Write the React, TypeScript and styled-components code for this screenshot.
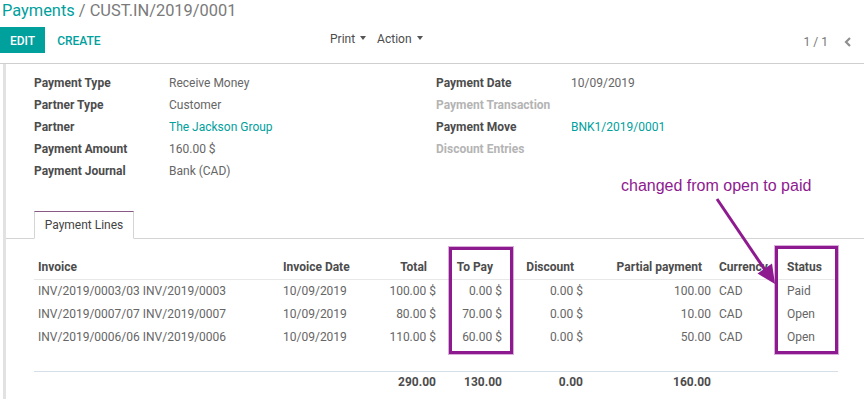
import React from "react";
import styled, { createGlobalStyle } from "styled-components";

const GlobalStyle = createGlobalStyle`
  html, body { margin: 0; padding: 0; background: #ffffff; }
  body { font-family: Roboto, "Noto Sans", sans-serif; font-size: 12px; color: #666666; }
  * { box-sizing: border-box; }
`;

const TEAL = "#00A09D";
const PURPLE = "#8E1A8F";

const Page = styled.div`
  position: relative;
  width: 864px;
  height: 399px;
  overflow: hidden;
  background: #fff;
`;

const ControlPanel = styled.div`
  height: 64px;
  border-bottom: 1px solid #cfcfcf;
  padding-left: 0;
`;

const Breadcrumb = styled.div`
  font-size: 16.4px;
  line-height: 22px;
  padding-left: 2px;
  color: #7a7a7a;
  white-space: nowrap;
`;

const Crumb = styled.span`
  color: ${TEAL};
`;

const ButtonRow = styled.div`
  display: flex;
  align-items: flex-start;
  margin-top: 5px;
  height: 26px;
`;

const MainButtons = styled.div`
  width: 330px;
  display: flex;
  gap: 0;
`;

const Button = styled.button<{ $primary?: boolean }>`
  height: 26px;
  padding: 2px 10px 0;
  border: none;
  border-radius: 0;
  font-family: Roboto, sans-serif;
  font-size: 12px;
  font-weight: 500;
  text-transform: uppercase;
  background: ${(p) => (p.$primary ? TEAL : "transparent")};
  color: ${(p) => (p.$primary ? "#ffffff" : TEAL)};
  margin-right: ${(p) => (p.$primary ? "2px" : "0")};
`;

const Sidebar = styled.div`
  display: flex;
  gap: 11px;
  padding-top: 2px;
`;

const Dropdown = styled.div`
  display: flex;
  align-items: center;
  gap: 5px;
  line-height: 20px;
  font-size: 12px;
  color: #4c4c4c;
`;

const Caret = styled.span`
  width: 0;
  height: 0;
  border-left: 3.5px solid transparent;
  border-right: 3.5px solid transparent;
  border-top: 4px solid #555;
  margin-top: -2px;
`;

const Pager = styled.div`
  margin-left: auto;
  display: flex;
  align-items: center;
  gap: 16px;
  padding-right: 12px;
  height: 26px;
  padding-top: 3px;
  color: #777;
  font-size: 12px;
`;

const Content = styled.div`
  margin-left: 3px;
  border-left: 3px solid #e2e2e2;
  height: 335px;
`;

const Sheet = styled.div`
  padding: 8px 26px 0 28px;
`;

const FieldGroups = styled.div`
  display: grid;
  grid-template-columns: 402px 402px;
`;

const FieldGroup = styled.div`
  display: grid;
  grid-template-columns: 135px 1fr;
  grid-auto-rows: 22px;
  align-items: center;
`;

const Label = styled.div<{ $empty?: boolean }>`
  font-weight: 700;
  color: ${(p) => (p.$empty ? "#b4b4b4" : "#4c4c4c")};
  white-space: nowrap;
`;

const Value = styled.div<{ $link?: boolean }>`
  color: ${(p) => (p.$link ? TEAL : "#666666")};
  white-space: nowrap;
`;

const TabNav = styled.div`
  margin: 29px -26px 0 -28px;
  padding-left: 28px;
  border-bottom: 1px solid #d4d4d4;
  display: flex;
`;

const Tab = styled.div`
  width: 100px;
  height: 28px;
  margin-bottom: -1px;
  border: 1px solid #d4d4d4;
  border-top: 1px solid #8a5a86;
  border-bottom: 1px solid #ffffff;
  background: #fff;
  color: #444;
  font-size: 12px;
  line-height: 27px;
  text-align: center;
`;

const Table = styled.table`
  margin-top: 17px;
  width: 804px;
  table-layout: fixed;
  border-collapse: collapse;
`;

const Th = styled.th<{ $num?: boolean }>`
  height: 23px;
  padding: 0 ${(p) => (p.$num ? "13px" : "4px")} 0 4px;
  text-align: ${(p) => (p.$num ? "right" : "left")};
  font-weight: 700;
  color: #4c4c4c;
  font-size: 12px;
  border-bottom: 1px solid #e8e8e8;
  white-space: nowrap;
`;

const Td = styled.td<{ $num?: boolean }>`
  height: 23px;
  padding: 0 4px;
  text-align: ${(p) => (p.$num ? "right" : "left")};
  color: #666666;
  white-space: nowrap;
  overflow: hidden;
`;

const FootTd = styled.td`
  height: 21px;
  padding: 0 4px;
  text-align: right;
  font-weight: 700;
  color: #4c4c4c;
  border-top: 1px solid #d6dfe8;
`;

const Highlight = styled.div<{ $x: number; $y: number; $w: number; $h: number }>`
  position: absolute;
  left: ${(p) => p.$x}px;
  top: ${(p) => p.$y}px;
  width: ${(p) => p.$w}px;
  height: ${(p) => p.$h}px;
  border: 3px solid ${PURPLE};
  box-shadow: 0 0 0 1px rgba(142, 26, 143, 0.35);
  pointer-events: none;
`;

const Annotation = styled.div`
  position: absolute;
  left: 621px;
  top: 176px;
  font-family: "Liberation Sans", Arial, sans-serif;
  font-size: 16px;
  line-height: 20px;
  color: ${PURPLE};
  white-space: nowrap;
`;

const ArrowSvg = styled.svg`
  position: absolute;
  left: 0;
  top: 0;
  pointer-events: none;
`;

const fieldsLeft = [
  { l: "Payment Type", v: "Receive Money" },
  { l: "Partner Type", v: "Customer" },
  { l: "Partner", v: "The Jackson Group", link: true },
  { l: "Payment Amount", v: "160.00 $" },
  { l: "Payment Journal", v: "Bank (CAD)" },
];

const fieldsRight = [
  { l: "Payment Date", v: "10/09/2019" },
  { l: "Payment Transaction", v: "", empty: true },
  { l: "Payment Move", v: "BNK1/2019/0001", link: true },
  { l: "Discount Entries", v: "", empty: true },
];

const lines = [
  ["INV/2019/0003/03 INV/2019/0003", "10/09/2019", "100.00 $", "0.00 $", "0.00 $", "100.00", "CAD", "Paid"],
  ["INV/2019/0007/07 INV/2019/0007", "10/09/2019", "80.00 $", "70.00 $", "0.00 $", "10.00", "CAD", "Open"],
  ["INV/2019/0006/06 INV/2019/0006", "10/09/2019", "110.00 $", "60.00 $", "0.00 $", "50.00", "CAD", "Open"],
];

const numCols = [false, false, true, true, true, true, false, false];
const colWidths = [245, 70, 91, 66, 81, 128, 68, 55];
const headers = ["Invoice", "Invoice Date", "Total", "To Pay", "Discount", "Partial payment", "Currency", "Status"];

export default function App() {
  return (
    <Page>
      <GlobalStyle />
      <ControlPanel>
        <Breadcrumb>
          <Crumb>Payments</Crumb> / CUST.IN/2019/0001
        </Breadcrumb>
        <ButtonRow>
          <MainButtons>
            <Button $primary>Edit</Button>
            <Button>Create</Button>
          </MainButtons>
          <Sidebar>
            <Dropdown>
              Print <Caret />
            </Dropdown>
            <Dropdown>
              Action <Caret />
            </Dropdown>
          </Sidebar>
          <Pager>
            <span>1 / 1</span>
            <svg width="8" height="10" viewBox="0 0 8 10">
              <polyline points="6,1 2,5 6,9" fill="none" stroke="#8f8f8f" strokeWidth="2.2" />
            </svg>
          </Pager>
        </ButtonRow>
      </ControlPanel>
      <Content>
        <Sheet>
          <FieldGroups>
            <FieldGroup>
              {fieldsLeft.map((f) => (
                <React.Fragment key={f.l}>
                  <Label>{f.l}</Label>
                  <Value $link={f.link}>{f.v}</Value>
                </React.Fragment>
              ))}
            </FieldGroup>
            <FieldGroup>
              {fieldsRight.map((f) => (
                <React.Fragment key={f.l}>
                  <Label $empty={f.empty}>{f.l}</Label>
                  <Value $link={f.link}>{f.v}</Value>
                </React.Fragment>
              ))}
            </FieldGroup>
          </FieldGroups>
          <TabNav>
            <Tab>Payment Lines</Tab>
          </TabNav>
          <Table>
            <colgroup>
              {colWidths.map((w, i) => (
                <col key={i} style={{ width: w }} />
              ))}
            </colgroup>
            <thead>
              <tr>
                {headers.map((h, i) => (
                  <Th key={h} $num={numCols[i]}>
                    {h}
                  </Th>
                ))}
              </tr>
            </thead>
            <tbody>
              {lines.map((r, ri) => (
                <tr key={ri}>
                  {r.map((c, ci) => (
                    <Td key={ci} $num={numCols[ci]}>
                      {c}
                    </Td>
                  ))}
                </tr>
              ))}
              <tr>
                {headers.map((h) => (
                  <Td key={h} />
                ))}
              </tr>
            </tbody>
            <tfoot>
              <tr>
                <FootTd />
                <FootTd />
                <FootTd>290.00</FootTd>
                <FootTd>130.00</FootTd>
                <FootTd>0.00</FootTd>
                <FootTd>160.00</FootTd>
                <FootTd />
                <FootTd />
              </tr>
            </tfoot>
          </Table>
        </Sheet>
      </Content>

      <Highlight $x={449} $y={247} $w={64} $h={107} />
      <Highlight $x={775} $y={246} $w={63} $h={108} />
      <Annotation>changed from open to paid</Annotation>
      <ArrowSvg width="864" height="399" viewBox="0 0 864 399">
        <line x1="717" y1="199" x2="765" y2="270" stroke={PURPLE} strokeWidth="3" />
        <polygon points="775,284 757.5,273.5 772,263.5" fill={PURPLE} />
      </ArrowSvg>
    </Page>
  );
}
